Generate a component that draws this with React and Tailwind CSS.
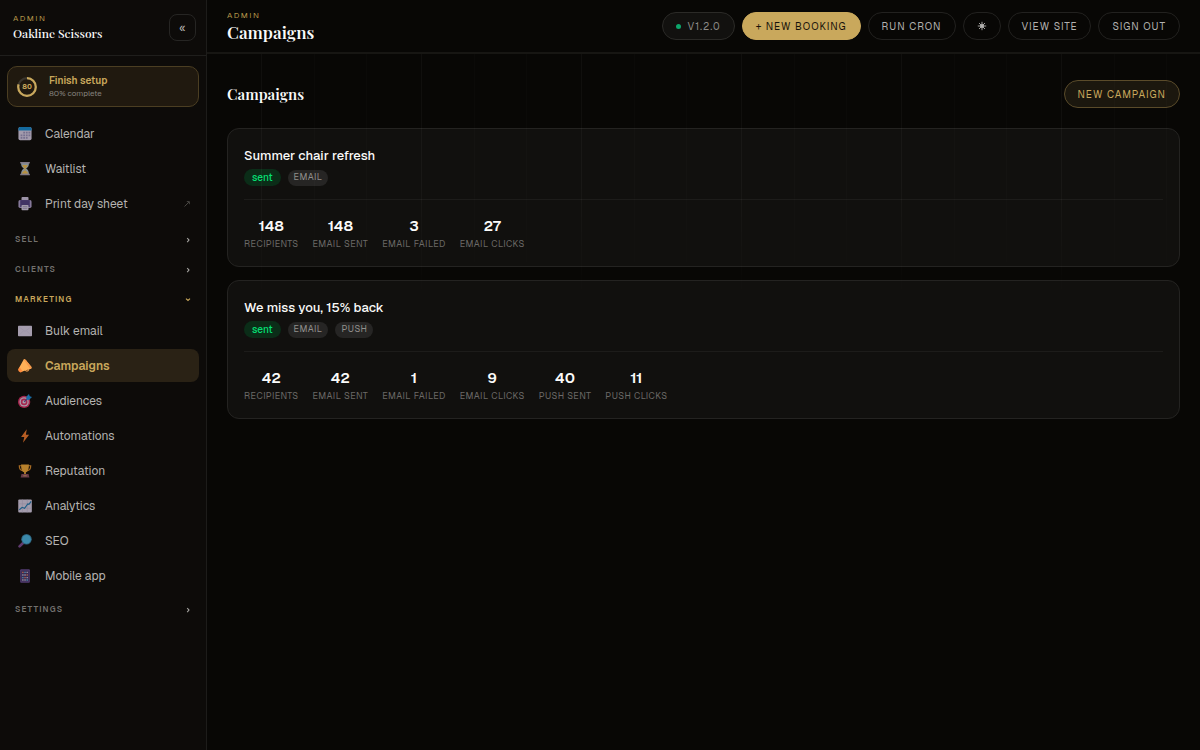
import React from "react";

const icons = {
  calendar: (
    <>
      <rect x="0.5" y="0" width="15" height="15" rx="2" fill="#e3d9f2" />
      <path d="M0.5 4V2a2 2 0 0 1 2-2h11a2 2 0 0 1 2 2v2z" fill="#1893dd" />
      <g fill="#a39bc8">
        <path d="M6 5.500h2v2H6zM9 5.500h2v2H9zM12 5.500h2v2h-2zM3 8.500h2v2H3zM6 8.500h2v2H6zM9 8.500h2v2H9zM12 8.500h2v2h-2zM3 11.500h2v2H3zM6 11.500h2v2H6zM9 11.500h2v2H9z" />
      </g>
    </>
  ),
  hourglass: (
    <>
      <path d="M3.500 1h9c0 3.500-1 4.800-3.200 6.500 2.200 1.700 3.200 3 3.200 6.500h-9c0-3.500 1-4.800 3.200-6.500C4.500 5.800 3.500 4.500 3.500 1z" fill="#b9c9d4" />
      <path d="M5 3.500h6c-.3 1.800-1.200 2.600-2.500 3.700V10c1.400.5 2.800 1.500 3.100 3.500H4.400c.3-2 1.700-3 3.100-3.500V7.200C6.200 6.100 5.300 5.300 5 3.500z" fill="#ffc955" />
      <path d="M2.500 0h11v1.700h-11zM2.500 13.300h11V15h-11z" fill="#b3aabb" />
    </>
  ),
  printer: (
    <>
      <rect x="4" y="0" width="8" height="6" rx="1" fill="#d9cdea" />
      <rect x="0.500" y="3.500" width="15" height="9" rx="1.800" fill="#b8a8d8" />
      <rect x="2.500" y="3.500" width="11" height="8" fill="#58458c" />
      <rect x="4" y="9" width="8" height="6" rx="1" fill="#e2d8f0" />
      <path d="M5.500 11h5M5.500 13h5" stroke="#a99cc5" />
    </>
  ),
  mail: (
    <>
      <rect x="0" y="2" width="16" height="12" rx="0.800" fill="#e6dcf5" />
      <path d="M.5 2.800 8 8.500l7.500-5.700M.5 13.500 6 8M15.500 13.500 10 8" fill="none" stroke="#d6cbe6" strokeWidth="0.700" />
    </>
  ),
  megaphone: (
    <>
      <path d="M8 12c.5 2.500 4 2.500 4.500-.5" fill="none" stroke="#d9904a" strokeWidth="1.300" />
      <path d="M6.500 0.500c1-.8 2 .2 2.600.9L15 8.700c1 1.300.3 2.600-1.200 2.600L4 14.500.8 10.900z" fill="#ffb057" />
      <path d="M6.500.5c1-.8 2 .2 2.600.9L15 8.700c1 1.300.3 2.600-1.200 2.600z" fill="#f79a4b" />
      <path d="m1.800 9.500 3.500 4.400-2 1.400c-1 .5-3.300-1.500-3.200-3.500z" fill="#ff8b3d" />
    </>
  ),
  target: (
    <>
      <circle cx="7" cy="9" r="7" fill="#e8326c" />
      <circle cx="7" cy="9" r="5.300" fill="#ecd9ed" />
      <circle cx="7" cy="9" r="3.800" fill="#e8326c" />
      <circle cx="7" cy="9" r="1.900" fill="#ecd9ed" />
      <path d="m7 9 5-5" stroke="#69489a" strokeWidth="1.300" />
      <path d="m9.500 3.200 3-3.200.9 2.500 2.600.9-3.200 3.200-3-.1z" fill="#1e98ea" />
    </>
  ),
  bolt: <path d="M10 .3 3.500 9h3.700l-1.500 6.700L12.700 6.500H9z" fill="#ff812f" />,
  trophy: (
    <>
      <path d="M4 2H1.500C1.500 5.500 3 7.500 5.500 7.500M12 2h2.500c0 3.500-1.500 5.500-4 5.500" fill="none" stroke="#e9942e" strokeWidth="1.400" />
      <path d="M3.500 .5h9c0 5-.8 8.200-3.500 9V12H7V9.500C4.300 8.700 3.500 5.500 3.500 .5z" fill="#ffb33c" />
      <path d="M4 11.500h8l1 4H3z" fill="#8f5064" />
      <path d="M6 13h4v1H6z" fill="#dfad64" />
    </>
  ),
  chart: (
    <>
      <rect x="0.300" y="0.500" width="15.500" height="15" rx="1.200" fill="#e4daf2" />
      <path d="M5 .5v15M10.500.5v15M.3 5.500h15.500M.3 10.500h15.500" stroke="#c4b9d6" strokeWidth="0.600" />
      <path d="m1.500 12.500 3.200-3 2.800 1.200 3.700-5 1.300.5 2.500-3.500" fill="none" stroke="#2381bc" strokeWidth="1.300" />
    </>
  ),
  search: (
    <>
      <path d="m1.800 14.200 4.500-4.500" stroke="#83509a" strokeWidth="3" strokeLinecap="round" />
      <circle cx="9.700" cy="6" r="6" fill="#3c8bb0" />
      <circle cx="9.700" cy="6" r="5" fill="#4fc0f0" />
    </>
  ),
  phone: (
    <>
      <rect x="2.500" y="0.300" width="11" height="15.400" rx="1" fill="#70509f" />
      <rect x="3.700" y="1.700" width="8.600" height="12.600" fill="#4b3b72" />
      <path d="M4.700 3h1.700v1.700H4.700zM9.700 6h1.700v1.700H9.700zM7.200 9h1.700v1.700H7.200z" fill="#ef7d66" />
      <path d="M7.200 3h1.700v1.700H7.200zM4.700 9h1.700v1.700H4.700zM9.700 11.700h1.700v1.700H9.700z" fill="#64b8ed" />
      <path d="M9.700 3h1.700v1.700H9.700zM4.700 6h1.700v1.700H4.700zM7.200 6h1.700v1.700H7.200zM9.700 9h1.700v1.700H9.700zM4.700 11.700h1.700v1.700H4.700zM7.200 11.700h1.700v1.700H7.200z" fill="#c8bdd9" />
    </>
  ),
};

function NavItem({ icon, label, active, external }) {
  return (
    <a
      href="#"
      aria-current={active ? "page" : undefined}
      className={
        "flex h-[33px] items-center gap-3 rounded-lg pr-2 pl-[11px] text-[12px] " +
        (active ? "bg-[#2a2215] font-semibold text-[#c9a85c]" : "text-[#b5b4b2]")
      }
    >
      <svg
        viewBox="0 0 16 16"
        className={"h-[14px] w-[14px] shrink-0 " + (active ? "" : "opacity-70")}
        aria-hidden="true"
      >
        {icons[icon]}
      </svg>
      <span className="flex-1 pl-px">{label}</span>
      {external && (
        <svg viewBox="0 0 8 8" className="h-2 w-2 text-[#55534f]" aria-hidden="true">
          <path d="M1.500 6.500 6 2M3.800 1.600h2.600v2.600" fill="none" stroke="currentColor" strokeWidth="0.800" />
        </svg>
      )}
    </a>
  );
}

function NavSection({ label, open }) {
  return (
    <button
      type="button"
      aria-expanded={!!open}
      className={
        "flex h-[30px] w-full items-center justify-between pr-[7px] pl-2 text-[8px] font-semibold tracking-[0.15em] uppercase " +
        (open ? "text-[#c9a85c]" : "text-[#73716e]")
      }
    >
      <span>{label}</span>
      <svg viewBox="0 0 8 8" className="h-2 w-2" aria-hidden="true">
        <path
          d={open ? "M2 3.600 4 5.400l2-1.800" : "M3.200 3 5 5.100 3.200 7.200"}
          fill="none"
          stroke={open ? "currentColor" : "#a5a3a0"}
          strokeWidth="1.100"
        />
      </svg>
    </button>
  );
}

const pill =
  "flex h-7 items-center justify-center rounded-full border px-[13px] text-[10px] tracking-[0.1em] whitespace-nowrap uppercase ";
const outline = pill + "border-[#22211f] text-[#b3b2b0]";

const campaigns = [
  {
    name: "Summer chair refresh",
    channels: ["Email"],
    stats: [
      ["Recipients", 148],
      ["Email sent", 148],
      ["Email failed", 3],
      ["Email clicks", 27],
    ],
  },
  {
    name: "We miss you, 15% back",
    channels: ["Email", "Push"],
    stats: [
      ["Recipients", 42],
      ["Email sent", 42],
      ["Email failed", 1],
      ["Email clicks", 9],
      ["Push sent", 40],
      ["Push clicks", 11],
    ],
  },
];

function CampaignCard({ name, channels, stats }) {
  return (
    <article className="rounded-xl border border-[#242321] bg-white/[0.035] px-4 pt-[17px] pb-4">
      <h3 className="text-[13px] leading-5 font-medium text-[#fafaf9]">{name}</h3>
      <div className="mt-[3px] flex items-center gap-[7px]">
        <span className="flex h-[17px] items-center rounded-full bg-[#0b2d18] px-2 text-[10px] font-medium text-[#05df72]">
          sent
        </span>
        {channels.map((c) => (
          <span
            key={c}
            className="flex h-4 items-center rounded-full bg-[#262524] px-[6px] text-[9px] tracking-[0.05em] text-[#92908d] uppercase"
          >
            {c}
          </span>
        ))}
      </div>
      <dl className="mt-[13px] flex flex-wrap gap-[14px] border-t border-[#1d1c1a] pt-4">
        {stats.map(([label, value]) => (
          <div key={label} className="flex flex-col-reverse items-center">
            <dt className="text-[9px] leading-3 tracking-[0.05em] text-[#6c6a67] uppercase">{label}</dt>
            <dd className="pb-[2px] text-[15px] leading-5 font-semibold text-[#fafaf9]">{value}</dd>
          </div>
        ))}
      </dl>
    </article>
  );
}

export default function App() {
  return (
    <div className="flex min-h-screen bg-[#080705] font-['Geist','Inter',sans-serif] text-[#fafaf9]">
      <aside className="flex w-[207px] shrink-0 flex-col border-r border-[#1d1c1a] bg-[#0d0b09]">
        <div className="flex h-14 items-center justify-between border-b border-[#1f1e1c] pr-[10px] pl-[13px]">
          <div>
            <p className="text-[8px] leading-[10px] tracking-[0.2em] text-[#b39448]">ADMIN</p>
            <p className="mt-px font-['Playfair_Display','Liberation_Serif',serif] text-[12px] leading-[18px] font-medium">
              Oakline Scissors
            </p>
          </div>
          <button
            type="button"
            aria-label="Collapse sidebar"
            className="flex h-[27px] w-[27px] items-center justify-center rounded-lg border border-[#262523] text-[12px] text-[#b5b4b2]"
          >
            «
          </button>
        </div>
        <nav aria-label="Admin" className="flex flex-col px-[7px] pt-[10px]">
          <a
            href="#"
            className="mb-[10px] flex h-[41px] items-center gap-3 rounded-[10px] border border-[#4b3e22] bg-[#20190f] px-[9px]"
          >
            <svg viewBox="0 0 20 20" className="h-5 w-5 shrink-0" aria-hidden="true">
              <circle cx="10" cy="10" r="8.800" fill="none" stroke="#3a352d" strokeWidth="2.200" />
              <circle
                cx="10"
                cy="10"
                r="8.800"
                fill="none"
                stroke="#c9a85c"
                strokeWidth="2.200"
                pathLength="100"
                strokeDasharray="80 20"
                transform="rotate(-90 10 10)"
              />
              <text x="10" y="12.400" textAnchor="middle" fontSize="7" fontWeight="700" fill="#c9a85c">
                80
              </text>
            </svg>
            <span className="pb-px">
              <span className="block text-[10px] leading-[13px] font-semibold text-[#c9a85c]">Finish setup</span>
              <span className="block text-[8px] leading-3 text-[#85827e]">80% complete</span>
            </span>
          </a>
          <div className="flex flex-col gap-[2px]">
            <NavItem icon="calendar" label="Calendar" />
            <NavItem icon="hourglass" label="Waitlist" />
            <NavItem icon="printer" label="Print day sheet" external />
          </div>
          <div className="mt-1">
            <NavSection label="Sell" />
            <NavSection label="Clients" />
            <NavSection label="Marketing" open />
          </div>
          <div className="flex flex-col gap-[2px]">
            <NavItem icon="mail" label="Bulk email" />
            <NavItem icon="megaphone" label="Campaigns" active />
            <NavItem icon="target" label="Audiences" />
            <NavItem icon="bolt" label="Automations" />
            <NavItem icon="trophy" label="Reputation" />
            <NavItem icon="chart" label="Analytics" />
            <NavItem icon="search" label="SEO" />
            <NavItem icon="phone" label="Mobile app" />
          </div>
          <div className="mt-[2px]">
            <NavSection label="Settings" />
          </div>
        </nav>
      </aside>

      <div className="flex min-w-0 flex-1 flex-col">
        <header className="flex min-h-[54px] items-center justify-between gap-4 border-b-2 border-[#171613] px-5">
          <div className="pt-px">
            <p className="text-[8px] leading-[10px] tracking-[0.2em] text-[#b39448]">ADMIN</p>
            <h1 className="font-['Playfair_Display','Liberation_Serif',serif] text-[17px] leading-6 font-semibold">
              Campaigns
            </h1>
          </div>
          <div className="flex items-center gap-[7px]">
            <span className={pill + "gap-[6px] border-[#2b2a27] bg-[#12110f] text-[#8d8b88]"}>
              <span className="h-[5px] w-[5px] rounded-full bg-[#0da66b]" />
              v1.2.0
            </span>
            <button type="button" className={pill + "border-[#c9a85c] bg-[#c9a85c] text-[#17120a]"}>
              + New booking
            </button>
            <button type="button" className={outline}>Run cron</button>
            <button type="button" aria-label="Toggle theme" className={outline}>
              <svg viewBox="0 0 10 10" className="h-[10px] w-[10px]" aria-hidden="true">
                <circle cx="5" cy="5" r="2" fill="currentColor" />
                <path
                  d="M5 .8v8.400M.8 5h8.400M2 2l6 6M8 2 2 8"
                  stroke="currentColor"
                  strokeWidth="0.900"
                />
              </svg>
            </button>
            <a href="#" className={outline}>View site</a>
            <button type="button" className={outline}>Sign out</button>
          </div>
        </header>

        <main className="relative flex-1 px-5 pt-[26px] pb-8">
          <div
            aria-hidden="true"
            className="pointer-events-none absolute inset-x-0 top-0 h-64 bg-[repeating-linear-gradient(90deg,transparent_0px,transparent_54px,rgba(255,255,255,0.035)_54px,rgba(255,255,255,0.035)_55px,transparent_55px,transparent_107px,rgba(255,255,255,0.015)_107px,rgba(255,255,255,0.015)_108px,transparent_108px,transparent_159px,rgba(255,255,255,0.015)_159px,rgba(255,255,255,0.015)_160px)] [mask-image:linear-gradient(to_bottom,black_50%,transparent)]"
          />
          <div className="flex items-center justify-between">
            <h2 className="font-['Playfair_Display','Liberation_Serif',serif] text-[15px] leading-6 font-semibold">
              Campaigns
            </h2>
            <button type="button" className={pill + "border-[#5a4b2a] bg-[#1b170e] text-[#c9a85c]"}>
              New campaign
            </button>
          </div>
          <div className="mt-5 flex flex-col gap-[13px]">
            {campaigns.map((c) => (
              <CampaignCard key={c.name} {...c} />
            ))}
          </div>
        </main>
      </div>
    </div>
  );
}
